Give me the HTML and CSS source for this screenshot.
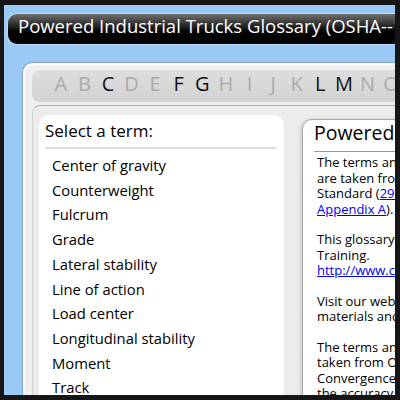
FILE: index.html
```html
<!DOCTYPE html>
<html lang="en">
<head>
    <meta charset="UTF-8">
    <title>Powered Industrial Trucks Glossary</title>
    <link rel="stylesheet" href="styles.css">
</head>
<body>
    <div class="screen">
        <div class="titlebar">Powered Industrial Trucks Glossary (OSHA--1910.178)</div>
        <div class="frame">
            <div class="letters">
                <span class="off">A</span>
                <span class="off">B</span>
                <span>C</span>
                <span class="off">D</span>
                <span class="off">E</span>
                <span>F</span>
                <span>G</span>
                <span class="off">H</span>
                <span class="off">I</span>
                <span class="off">J</span>
                <span class="off">K</span>
                <span>L</span>
                <span>M</span>
                <span class="off">N</span>
                <span class="off">O</span>
                <span>P</span>
                <span class="off">Q</span>
            </div>
            <div class="content">
                <div class="terms">
                    <h2>Select a term:</h2>
                    <ul>
                        <li>Center of gravity</li>
                        <li>Counterweight</li>
                        <li>Fulcrum</li>
                        <li>Grade</li>
                        <li>Lateral stability</li>
                        <li>Line of action</li>
                        <li>Load center</li>
                        <li>Longitudinal stability</li>
                        <li>Moment</li>
                        <li>Track</li>
                        <li>Wheelbase</li>
                    </ul>
                </div>
                <div class="definition">
                    <h1>Powered Industrial Trucks</h1>
                    <p>The terms and definitions in this glossary<br>are taken from the OSHA Powered Industrial Truck<br>Standard (<a href="#">29 CFR 1910.178</a> and<br><a href="#">Appendix A</a>).</p>
                    <p>This glossary was created by Convergence<br>Training.<br><a href="#">http://www.convergencetraining.com</a></p>
                    <p>Visit our web site for more safety training<br>materials and e-learning courses.</p>
                    <p>The terms and definitions in this glossary are<br>taken from OSHA documents. Neither<br>Convergence Training nor OSHA guarantees<br>the accuracy of these definitions.</p>
                </div>
            </div>
        </div>
    </div>
</body>
</html>
```

FILE: styles.css
```css
body {
    margin: 0;
    height: 400px;
    overflow: hidden;
    background-color: #161616;
    font-family: "Open Sans", sans-serif;
}
.screen {
    box-sizing: border-box;
    height: 390px;
    margin: 5px 5px 0 4px;
    padding: 9px 0 0 4px;
    background-color: #9ac9f5;
    overflow: hidden;
}
.titlebar {
    box-sizing: border-box;
    width: 600px;
    height: 30px;
    padding: 1px 0 0 10px;
    border-radius: 9px 0 0 9px;
    background: linear-gradient(#707070, #1c1c1c 45%, #000 60%, #050505);
    box-shadow: 0 0 1px 1px rgba(255, 255, 255, 0.35);
    color: #ffffff;
    font-size: 18.5px;
    line-height: 22px;
    white-space: nowrap;
}
.frame {
    width: 700px;
    margin: 18px 0 0 14px;
    padding: 7px 0 0 9px;
    border: 1px solid #7fa2c6;
    border-right: none;
    border-radius: 10px 0 0 0;
    background-color: #efefef;
    box-shadow: inset 1px 1px 0 1px #ffffff;
}
.letters {
    display: flex;
    height: 28px;
    padding: 0 0 4px 17px;
    border-radius: 8px 0 0 8px;
    background: linear-gradient(#dedede, #d2d2d2);
    font-size: 20px;
    line-height: 28px;
    color: #111111;
}
.letters span {
    width: 23.6px;
    flex: none;
    text-align: center;
}
.letters .off {
    color: #ababab;
}
.content {
    display: flex;
    align-items: flex-start;
    gap: 18px;
    height: 320px;
    margin: 3px 0 0 0;
    padding: 9px 0 0 6px;
    border-top: 1px solid #b0b0b0;
    border-left: 1px solid #d4d4d4;
    border-radius: 8px 0 0 0;
    background-color: #ececec;
}
.terms {
    flex: none;
    width: 239px;
    height: 300px;
    padding: 4px 0 0 6px;
    border-radius: 10px 10px 0 0;
    background-color: #ffffff;
}
.terms h2 {
    margin: 0 8px 0 0;
    padding-bottom: 5px;
    border-bottom: 2px solid #dddddd;
    font-size: 17px;
    font-weight: normal;
    line-height: 23px;
}
.terms ul {
    list-style: none;
    margin: 4px 0 0 0;
    padding: 0 0 0 7px;
    font-size: 14.8px;
    line-height: 24.7px;
}
.definition {
    flex: none;
    width: 320px;
    height: 300px;
    margin-top: 4px;
    padding: 0 0 0 11px;
    border: 1px solid #a9a9a9;
    border-radius: 10px 0 0 0;
    background-color: #ffffff;
    box-shadow: inset 1px 1px 0 1px #ffffff, -2px 0 3px rgba(0, 0, 0, 0.12);
    white-space: nowrap;
}
.definition h1 {
    margin: 0;
    padding-bottom: 5px;
    border-bottom: 1px solid #9a9a9a;
    font-size: 19.5px;
    font-weight: normal;
    line-height: 26px;
}
.definition p {
    margin: 3px 0 15px 3px;
    font-size: 13px;
    line-height: 15.5px;
}
.definition a {
    color: #0000ee;
}
```
